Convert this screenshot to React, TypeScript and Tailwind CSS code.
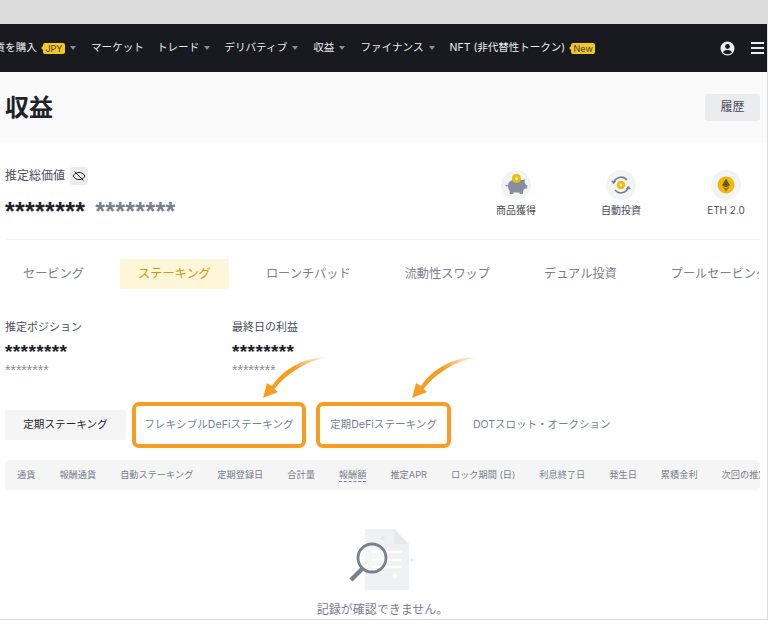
const font = '[font-family:Inter,"Noto_Sans_CJK_JP",sans-serif]'

const columns = ['通貨', '報酬通貨', '自動ステーキング', '定期登録日', '合計量', '報酬額', '推定APR', 'ロック期間 (日)', '利息終了日', '発生日', '累積金利', '次回の推定']

function Caret() {
  return <span className="ml-[5px] h-0 w-0 border-x-[3px] border-t-[4px] border-x-transparent border-t-[#848e9c]" />
}

function Badge({ children }: { children: string }) {
  return (
    <span className="relative ml-[6px] flex h-[11px] items-center rounded-[2px] bg-[#f0c929] px-[2.5px] text-[9px] leading-none text-[#4a4220]">
      <span className="absolute left-[-2px] top-[3px] h-0 w-0 border-y-[2.5px] border-r-[2px] border-y-transparent border-r-[#f0c929]" />
      {children}
    </span>
  )
}

function Arrow({ className, id }: { className: string; id: string }) {
  return (
    <svg className={`absolute ${className}`} width="66" height="44" viewBox="0 0 66 44">
      <defs>
        <linearGradient id={id} x1="0" y1="1" x2="1" y2="0">
          <stop offset="0.6" stopColor="#f79d23" />
          <stop offset="1" stopColor="#f79d23" stopOpacity="0.1" />
        </linearGradient>
      </defs>
      <path d="M64 0C42 1 22 10 9 29L4 26L0 41L15 35L11.500 32C24 16 42 5 64 0Z" fill={`url(#${id})`} />
    </svg>
  )
}

function PiggyIcon() {
  return (
    <svg width="24" height="22" viewBox="0 0 24 22">
      <path d="M4 11.500C4 8 7.500 5.500 12 5.500c4 0 7.500 1.600 8.500-.5.600 1.500.2 3 0 3.600.7.700 1.200 1.500 1.500 2.400h1.200v3.500H21c-.6 1-1.200 1.600-2 2.200V20h-3.200l-.6-1.600H9.600L9 20H5.800v-3C4.600 15.600 4 13.800 4 12.500l-2.400-.3v-1.600z" fill="#848e9c" />
      <circle cx="12.500" cy="4.500" r="4.500" fill="#f0b90b" />
      <circle cx="12.500" cy="4.500" r="1.500" fill="#fff3c4" />
    </svg>
  )
}

function AutoInvestIcon() {
  return (
    <svg width="20" height="20" viewBox="0 0 20 20" fill="none">
      <path d="M2.600 8.500A7.600 7.600 0 0 1 16 5" stroke="#76808f" strokeWidth="1.600" />
      <path d="M17.400 11.500A7.600 7.600 0 0 1 4 15" stroke="#76808f" strokeWidth="1.600" />
      <path d="M0 5.800l2.500 3.200 2.700-3z M20 14.200l-2.500-3.200-2.700 3z" fill="#76808f" />
      <circle cx="10" cy="10" r="4.200" fill="#f0b90b" />
      <circle cx="10" cy="10" r="1.500" fill="#fff3c4" />
    </svg>
  )
}

function EthIcon() {
  return (
    <svg width="18" height="18" viewBox="0 0 18 18">
      <circle cx="9" cy="9" r="8.500" fill="#f0b90b" />
      <path d="M9 2.500L5 9.200 9 11.500l4-2.300z" fill="#6d5a1e" />
      <path d="M9 12.500L5.200 10.200 9 15.500l3.800-5.300z" fill="#8a7327" />
    </svg>
  )
}

function QuickLink({ label, children }: { label: string; children: React.ReactNode }) {
  return (
    <div className="flex w-[68px] flex-col items-center gap-[3px]">
      <div className="flex h-[30px] w-[30px] items-center justify-center rounded-full bg-[#f3f3f4]">{children}</div>
      <span className="text-[10px] leading-[15px] text-[#474d57]">{label}</span>
    </div>
  )
}

function Balance({ label, className = '' }: { label: string; className?: string }) {
  return (
    <div className={className}>
      <div className="text-[11px] leading-[16px] text-[#474d57]">{label}</div>
      <div className="mt-[9px] font-['Liberation_Sans'] text-[19px] font-bold leading-[15px] tracking-[0.4px] text-[#1e2329]">********</div>
      <div className="mt-[4px] font-['Liberation_Sans'] text-[14px] leading-[15px] text-[#848e9c]">********</div>
    </div>
  )
}

function EmptyArt() {
  return (
    <svg width="70" height="62" viewBox="0 0 70 62">
      <path d="M17 0h29l15 15v46H17z" fill="#f0f1f2" />
      <path d="M46 0l15 15H46z" fill="#e6e8ea" />
      <path d="M24 23h30M24 31h30M24 38h30" stroke="#fff" strokeWidth="2.500" />
      <path d="M47 44l3 3-3 3-3-3z" fill="#fff" />
      <path d="M35 7l2 2-2 2-2-2z" fill="#e1e3e6" />
      <path d="M64 29l2 2-2 2-2-2z" fill="#e6e8eb" />
      <circle cx="24" cy="29" r="14" fill="#fff" fillOpacity="0.35" stroke="#76808f" strokeWidth="2.800" />
      <path d="M14 40L3 51" stroke="#76808f" strokeWidth="4.500" />
    </svg>
  )
}

export default function App() {
  return (
    <div className={`relative h-[620px] w-[768px] overflow-hidden border-r border-b border-[#dcdcdc] bg-white ${font}`}>
      <div className="h-[24px] bg-[#dcdcdc]" />

      {/* Top nav */}
      <nav className="flex h-[48px] items-center whitespace-nowrap bg-[#181a20] text-[10.6px] text-[#eaecef]">
        <span className="ml-[-16px]">通貨を購入</span>
        <Badge>JPY</Badge>
        <Caret />
        <span className="ml-[15px]">マーケット</span>
        <span className="ml-[13px]">トレード</span>
        <Caret />
        <span className="ml-[14px]">デリバティブ</span>
        <Caret />
        <span className="ml-[15px]">収益</span>
        <Caret />
        <span className="ml-[15px]">ファイナンス</span>
        <Caret />
        <span className="ml-[15px] text-[10.5px]">NFT (非代替性トークン)</span>
        <Badge>New</Badge>
        <div className="ml-auto flex items-center gap-[16px] pr-[3px]">
          <svg width="15" height="15" viewBox="0 0 15 15">
            <circle cx="7.500" cy="7.500" r="7" fill="#eaecef" />
            <circle cx="7.500" cy="5.500" r="2.400" fill="#181a20" />
            <path d="M3 11.200c1-1.600 2.600-2.200 4.500-2.200s3.500.6 4.500 2.200c-1 1.200-2.700 2-4.500 2s-3.500-.8-4.500-2z" fill="#181a20" />
          </svg>
          <div className="flex w-[13px] flex-col gap-[3px]">
            <span className="h-[2px] bg-[#eaecef]" />
            <span className="h-[2px] bg-[#eaecef]" />
            <span className="h-[2px] bg-[#eaecef]" />
          </div>
        </div>
      </nav>

      {/* Title */}
      <header className="flex h-[70px] items-center justify-between bg-[#fafafa] pl-[5px] pr-[7px]">
        <h1 className="mt-[2px] text-[24px] font-bold leading-none text-[#1e2329]">収益</h1>
        <button className="h-[27px] w-[55px] rounded-[3px] bg-[#eaecef] text-[12px] text-[#474d57]">履歴</button>
      </header>

      {/* Total value */}
      <section className="ml-[5px] mr-[7px] flex h-[98px] justify-between border-b border-[#f0f1f2]">
        <div className="pt-[25px]">
          <div className="flex items-center gap-[5px]">
            <span className="text-[12px] leading-[18px] text-[#474d57]">推定総価値</span>
            <span className="flex h-[18px] w-[18px] items-center justify-center rounded-[3px] bg-[#eaecef]">
              <svg width="14" height="12" viewBox="0 0 14 12" fill="none" stroke="#1e2329" strokeWidth="1">
                <path d="M1 6c1.500-2.500 3.500-3.500 6-3.500S11.500 3.500 13 6c-1.500 2.500-3.500 3.500-6 3.500S2.500 8.500 1 6z" />
                <path d="M2.500 1.500l9 9" />
              </svg>
            </span>
          </div>
          <div className="mt-[14px] flex gap-[10px] font-['Liberation_Sans'] text-[25px] font-bold leading-[24px] tracking-[0.3px]">
            <span className="text-[#1e2329]">********</span>
            <span className="text-[#76808f]">********</span>
          </div>
        </div>
        <div className="flex items-start gap-[37px] pt-[28px]">
          <QuickLink label="商品獲得"><PiggyIcon /></QuickLink>
          <QuickLink label="自動投資"><AutoInvestIcon /></QuickLink>
          <QuickLink label="ETH 2.0"><EthIcon /></QuickLink>
        </div>
      </section>

      {/* Product tabs */}
      <div className="mt-[19px] flex h-[30px] items-center whitespace-nowrap pr-[7px] text-[12.2px] text-[#76808f]">
        <span className="ml-[23px]">セービング</span>
        <span className="ml-[36px] flex h-[30px] w-[109px] items-center justify-center rounded-[2px] bg-[#fef6d8] text-[#d0980b]">ステーキング</span>
        <span className="ml-[37px]">ローンチパッド</span>
        <span className="ml-[54px]">流動性スワップ</span>
        <span className="ml-[54px]">デュアル投資</span>
        <span className="ml-[54px] w-[88px] overflow-hidden">プールセービング</span>
      </div>

      {/* Positions */}
      <div className="mt-[30px] flex">
        <Balance label="推定ポジション" className="w-[232px] pl-[5px]" />
        <Balance label="最終日の利益" />
      </div>

      {/* Staking types */}
      <div className="mt-[24px] flex h-[46px] items-center whitespace-nowrap text-[10.6px] text-[#76808f]">
        <span className="ml-[5px] flex h-[30px] w-[121px] items-center justify-center rounded-[2px] bg-[#f5f5f5] text-[#1e2329]">定期ステーキング</span>
        <span className="ml-[6px] flex h-[46px] w-[174px] items-center justify-center rounded-[7px] border-[4.5px] border-[#f79d23]">フレキシブルDeFiステーキング</span>
        <span className="ml-[10px] flex h-[46px] w-[135px] items-center justify-center rounded-[7px] border-[4.5px] border-[#f79d23]">定期DeFiステーキング</span>
        <span className="ml-[22px] text-[10.5px]">DOTスロット・オークション</span>
      </div>

      {/* Table head */}
      <div className="ml-[5px] mt-[12px] flex h-[30px] w-[755px] items-center gap-[24px] overflow-hidden whitespace-nowrap rounded-[4px] bg-[#f5f5f5] pl-[12px] text-[9.2px] text-[#76808f]">
        {columns.map((c) => (
          <span key={c} className={c === '報酬額' ? 'border-b border-dashed border-[#76808f] leading-[12px]' : ''}>{c}</span>
        ))}
      </div>

      {/* Empty state */}
      <div className="mt-[39px] flex flex-col items-center">
        <div className="ml-[-1px]"><EmptyArt /></div>
        <p className="ml-[-2px] mt-[11px] text-[12px] leading-[16px] text-[#76808f]">記録が確認できません。</p>
      </div>

      <Arrow id="fadeA" className="left-[263px] top-[357px]" />
      <Arrow id="fadeB" className="left-[412px] top-[357px]" />
    </div>
  )
}
